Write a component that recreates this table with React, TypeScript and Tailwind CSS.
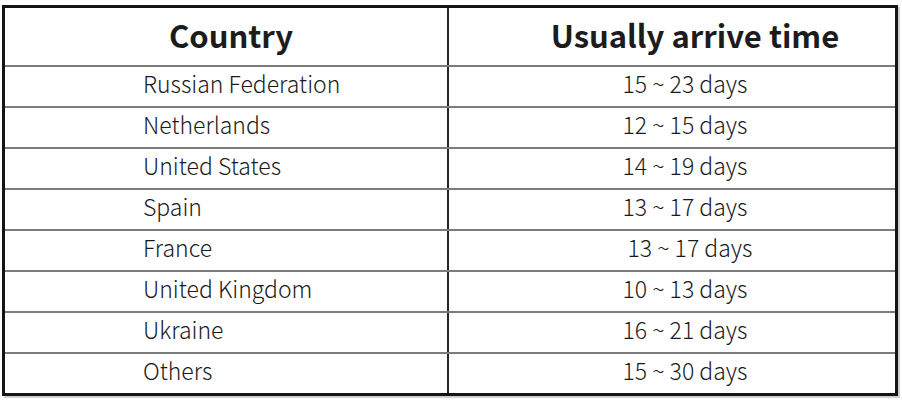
const rows = [
  { country: "Russian Federation", time: "15 ~ 23 days" },
  { country: "Netherlands", time: "12 ~ 15 days" },
  { country: "United States", time: "14 ~ 19 days" },
  { country: "Spain", time: "13 ~ 17 days" },
  { country: "France", time: "13 ~ 17 days", shift: true },
  { country: "United Kingdom", time: "10 ~ 13 days" },
  { country: "Ukraine", time: "16 ~ 21 days" },
  { country: "Others", time: "15 ~ 30 days" },
];

const App = () => {
  return (
    <div
      className="w-[902px] h-[400px] bg-white pt-[5px] pl-[2px] overflow-hidden"
      style={{ fontFamily: '"Noto Sans CJK SC", "Noto Sans", sans-serif' }}
    >
      <div className="w-[896px] border-[3px] border-[#141414] shadow-[2px_2px_0_#cfcfcf]">
        {/* header */}
        <div className="flex h-[57px] text-[#1c1c1c] font-bold text-[31px]">
          <div className="w-[442px] flex items-center justify-center pl-[10px] pb-[2px]">Country</div>
          <div className="flex-1 border-l-2 border-[#262626] flex items-center justify-center pl-[46px] pb-[2px]">
            Usually arrive time
          </div>
        </div>

        {rows.map((row) => (
          <div
            key={row.country}
            className="flex h-[41px] border-t-2 border-[#7c7c7c] text-[23px] font-light text-[#1a1a1a]"
          >
            <div className="w-[442px] flex items-center pl-[138px] pb-[7px]">{row.country}</div>
            <div
              className={
                row.shift
                  ? "flex-1 border-l-2 border-[#262626] flex items-center justify-center pl-[36px] pb-[7px]"
                  : "flex-1 border-l-2 border-[#262626] flex items-center justify-center pl-[26px] pb-[7px]"
              }
            >
              {row.time}
            </div>
          </div>
        ))}
      </div>
    </div>
  );
};

export default App;
